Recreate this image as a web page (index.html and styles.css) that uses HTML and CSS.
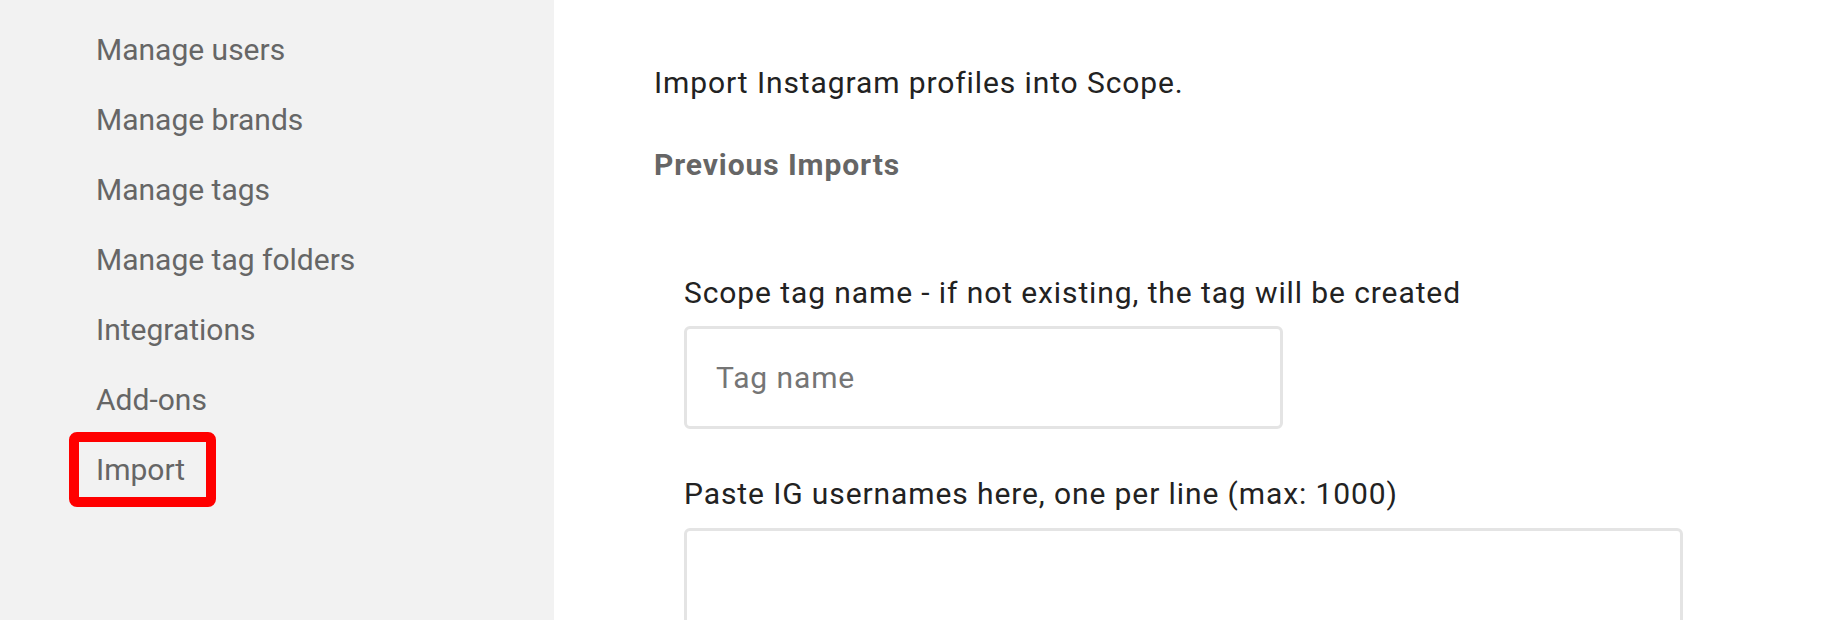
FILE: index.html
```html
<!DOCTYPE html>
<html lang="en">
<head>
<meta charset="utf-8">
<title>Import</title>
<link rel="stylesheet" href="styles.css">
</head>
<body>
<div class="layout">
  <nav class="sidebar">
    <a class="nav-item" href="#">Manage users</a>
    <a class="nav-item" href="#">Manage brands</a>
    <a class="nav-item" href="#">Manage tags</a>
    <a class="nav-item" href="#">Manage tag folders</a>
    <a class="nav-item" href="#">Integrations</a>
    <a class="nav-item" href="#">Add-ons</a>
    <a class="nav-item nav-item--highlight" href="#">Import</a>
  </nav>
  <main class="content">
    <p class="intro">Import Instagram profiles into Scope.</p>
    <h3 class="section-title">Previous Imports</h3>
    <div class="form">
      <label class="field-label" for="tag">Scope tag name - if not existing, the tag will be created</label>
      <input class="text-input" id="tag" type="text" placeholder="Tag name">
      <label class="field-label field-label--second" for="users">Paste IG usernames here, one per line (max: 1000)</label>
      <textarea class="text-area" id="users"></textarea>
    </div>
  </main>
</div>
</body>
</html>
```

FILE: styles.css
```css
*, *::before, *::after { box-sizing: border-box; }
html, body {
  margin: 0;
  height: 100%;
  overflow: hidden;
  background: #ffffff;
  font-family: Roboto, "Liberation Sans", sans-serif;
  font-size: 30px;
}
.layout {
  display: flex;
  height: 620px;
  overflow: hidden;
}
.sidebar {
  width: 554px;
  flex: none;
  background: #f2f2f2;
  display: flex;
  flex-direction: column;
  align-items: flex-start;
  padding-top: 15px;
  padding-left: 96px;
}
.nav-item {
  display: block;
  line-height: 70px;
  height: 70px;
  color: #666666;
  text-decoration: none;
}
.nav-item--highlight {
  position: relative;
}
.nav-item--highlight::after {
  content: "";
  position: absolute;
  left: -27px;
  top: -3px;
  width: 147px;
  height: 75px;
  border: 10px solid #ff0000;
  border-radius: 8px;
}
.content {
  flex: 1;
  padding: 63px 0 0 100px;
  letter-spacing: 0.9px;
}
.intro {
  margin: 0;
  line-height: 40px;
  color: #222222;
}
.section-title {
  margin: 42px 0 0;
  line-height: 40px;
  font-size: 30px;
  font-weight: 700;
  color: #666666;
}
.form {
  padding-left: 30px;
  padding-top: 88px;
  display: flex;
  flex-direction: column;
  align-items: flex-start;
}
.field-label {
  line-height: 40px;
  color: #222222;
}
.field-label--second {
  margin-top: 45px;
}
.text-input {
  margin-top: 13px;
  width: 599px;
  height: 103px;
  border: 3px solid #e4e4e4;
  border-radius: 6px;
  padding: 0 29px;
  font: inherit;
  letter-spacing: inherit;
  color: #222222;
  outline: none;
}
.text-input::placeholder {
  color: #757575;
}
.text-area {
  margin-top: 14px;
  width: 999px;
  height: 200px;
  border: 3px solid #e4e4e4;
  border-radius: 6px;
  font: inherit;
  resize: none;
  outline: none;
}
```
